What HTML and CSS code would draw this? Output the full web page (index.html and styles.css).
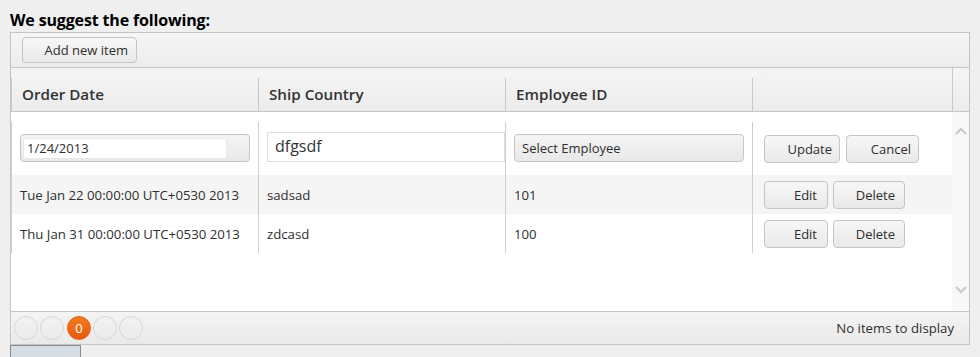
FILE: index.html
```html
<!DOCTYPE html>
<html>
<head>
<meta charset="utf-8">
<link rel="stylesheet" href="styles.css">
</head>
<body>
<div class="title">We suggest the following:</div>
<div class="grid">
  <div class="toolbar">
    <button class="btn add">Add new item</button>
  </div>
  <div class="header">
    <div class="hrow">
      <div class="hcell">Order Date</div>
      <div class="hcell">Ship Country</div>
      <div class="hcell">Employee ID</div>
      <div class="hcell"></div>
    </div>
    <div class="hstub"></div>
  </div>
  <div class="content">
    <div class="rows">
      <div class="row edit">
        <div class="cell">
          <div class="datepicker"><div class="dateinput">1/24/2013</div></div>
        </div>
        <div class="cell clip">
          <div class="textinput">dfgsdf</div>
        </div>
        <div class="cell">
          <div class="dropdown">Select Employee</div>
        </div>
        <div class="cell actions">
          <button class="btn upd">Update</button>
          <button class="btn cancel">Cancel</button>
        </div>
      </div>
      <div class="row alt">
        <div class="cell">Tue Jan 22 00:00:00 UTC+0530 2013</div>
        <div class="cell">sadsad</div>
        <div class="cell">101</div>
        <div class="cell actions small">
          <button class="btn edt">Edit</button>
          <button class="btn del">Delete</button>
        </div>
      </div>
      <div class="row">
        <div class="cell">Thu Jan 31 00:00:00 UTC+0530 2013</div>
        <div class="cell">zdcasd</div>
        <div class="cell">100</div>
        <div class="cell actions small">
          <button class="btn edt">Edit</button>
          <button class="btn del">Delete</button>
        </div>
      </div>
    </div>
    <div class="scrollbar">
      <svg class="arrow" width="12" height="8" viewBox="0 0 12 8"><path d="M1 7 L6 2 L11 7" fill="none" stroke="#c9c9c9" stroke-width="2"/></svg>
      <svg class="arrow" width="12" height="8" viewBox="0 0 12 8"><path d="M1 1 L6 6 L11 1" fill="none" stroke="#c9c9c9" stroke-width="2"/></svg>
    </div>
  </div>
  <div class="pager">
    <div class="pages">
      <span class="pg"></span>
      <span class="pg"></span>
      <span class="pg cur">0</span>
      <span class="pg"></span>
      <span class="pg"></span>
    </div>
    <div class="info">No items to display</div>
  </div>
</div>
<div class="tab"></div>
</body>
</html>
```

FILE: styles.css
```css
html, body {
  margin: 0;
  padding: 0;
}
body {
  background: #efefef;
  font-family: "Open Sans", "Noto Sans", sans-serif;
  color: #2e2e2e;
  width: 980px;
  height: 357px;
  overflow: hidden;
}
.title {
  height: 32px;
  box-sizing: border-box;
  padding: 10px 0 0 10px;
  font-weight: 700;
  font-size: 16px;
  line-height: 21px;
  color: #000;
  letter-spacing: -0.15px;
}
.grid {
  margin-left: 10px;
  width: 960px;
  border: 1px solid #c5c5c5;
  border-bottom: none;
  box-sizing: border-box;
  background: #fff;
}
.toolbar {
  height: 35px;
  box-sizing: border-box;
  border-bottom: 1px solid #c5c5c5;
  background: linear-gradient(#f6f6f6, #ececec);
  padding: 4px 11px;
}
.btn {
  font-family: "Open Sans", "Noto Sans", sans-serif;
  font-size: 13px;
  color: #2e2e2e;
  height: 28px;
  border: 1px solid #c5c5c5;
  border-radius: 4px;
  background: linear-gradient(#f7f7f7, #e9e9e9);
  padding: 0 7px 0 0;
  text-align: right;
  box-sizing: border-box;
  margin: 0;
}
.btn.add {
  width: 115px;
  height: 26px;
  padding-right: 8px;
}
.header {
  display: flex;
  height: 44px;
  box-sizing: border-box;
  border-bottom: 1px solid #c5c5c5;
  background: linear-gradient(#f5f5f5, #ececec);
}
.hrow {
  display: grid;
  grid-template-columns: 247px 247px 247px 200px;
  padding-top: 10px;
}
.hcell {
  border-left: 1px solid #c8c8c8;
  box-sizing: border-box;
  padding: 0 10px;
  font-weight: 600;
  font-size: 15.2px;
  line-height: 33px;
  color: #333;
}
.hstub {
  width: 17px;
  border-left: 1px solid #c8c8c8;
}
.content {
  display: flex;
  height: 200px;
  border-bottom: 1px solid #c5c5c5;
  box-sizing: border-box;
}
.rows {
  width: 941px;
  padding-top: 10px;
}
.row {
  display: grid;
  grid-template-columns: 247px 247px 247px 200px;
  height: 39px;
}
.row.edit {
  height: 53px;
}
.row.alt {
  background: #f5f5f5;
}
.cell {
  border-left: 1px solid #cfcfcf;
  box-sizing: border-box;
  padding: 0 0 0 8px;
  font-size: 13.2px;
  display: flex;
  align-items: center;
  white-space: nowrap;
}
.row.edit .cell {
  align-items: flex-start;
  padding-top: 12px;
}
.cell.clip {
  overflow: hidden;
  padding-top: 10px !important;
}
.datepicker {
  width: 230px;
  height: 28px;
  box-sizing: border-box;
  border: 1px solid #c5c5c5;
  border-radius: 4px;
  background: linear-gradient(#f4f4f4, #e8e8e8);
  padding: 3px 22px 2px 2px;
}
.dateinput {
  height: 21px;
  background: #fff;
  border-radius: 3px;
  box-shadow: inset 0 0 0 1px #e9e9e9;
  font-size: 13px;
  line-height: 21px;
  padding-left: 4px;
  color: #2e2e2e;
}
.textinput {
  width: 260px;
  height: 30px;
  box-sizing: border-box;
  border: 1px solid #dedede;
  background: #fff;
  font-size: 16px;
  line-height: 27px;
  padding-left: 7px;
  color: #333;
}
.dropdown {
  width: 230px;
  height: 28px;
  box-sizing: border-box;
  border: 1px solid #c5c5c5;
  border-radius: 4px;
  background: linear-gradient(#f4f4f4, #e8e8e8);
  font-size: 13px;
  line-height: 27px;
  padding-left: 7px;
}
.actions {
  padding-left: 11px;
  gap: 6px;
}
.row.edit .actions {
  padding-top: 13px;
}
.small {
  gap: 5px;
}
.btn.upd { width: 76px; }
.btn.cancel { width: 73px; }
.btn.edt { width: 64px; padding-right: 10px; }
.btn.del { width: 72px; padding-right: 9px; }
.scrollbar {
  width: 17px;
  background: #f8f8f8;
  display: flex;
  flex-direction: column;
  justify-content: space-between;
  align-items: center;
  padding: 15px 0 17px;
  box-sizing: border-box;
}
.arrow {
  display: block;
}
.pager {
  height: 33px;
  box-sizing: border-box;
  border-bottom: 1px solid #c5c5c5;
  background: linear-gradient(#f4f4f4, #e9e9e9);
  display: flex;
  align-items: center;
  justify-content: space-between;
  padding: 0 15px 0 3px;
}
.pages {
  display: flex;
  gap: 2px;
}
.pg {
  width: 24px;
  height: 24px;
  box-sizing: border-box;
  border: 1px solid #d6d6d6;
  border-radius: 50%;
  font-size: 13px;
  line-height: 22px;
  text-align: center;
  color: #fff;
}
.pg.cur {
  background: linear-gradient(#f37b22, #e5590b);
  border-color: #e8600f;
  margin-left: 1px;
}
.info {
  font-size: 13.2px;
  color: #2e2e2e;
}
.tab {
  margin-left: 10px;
  width: 71px;
  height: 12px;
  box-sizing: border-box;
  border: 1px solid #8a8a8a;
  border-bottom: none;
  background: #d6dde3;
}
```
